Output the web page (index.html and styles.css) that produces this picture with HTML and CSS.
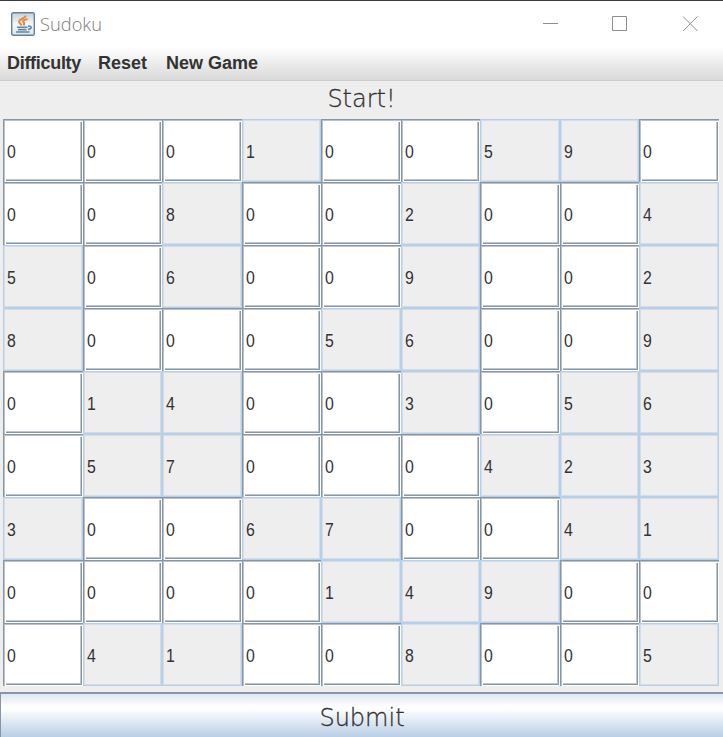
FILE: index.html
```html
<!DOCTYPE html>
<html lang="en">
<head>
<meta charset="utf-8">
<title>Sudoku</title>
<link rel="stylesheet" href="styles.css">
</head>
<body>
<div class="window">
  <header class="titlebar">
    <svg class="logo" width="24" height="24" viewBox="0 0 24 24" fill="none">
      <defs><linearGradient id="tile" x1="0" y1="0" x2="0" y2="1"><stop offset="0" stop-color="#c3d0da"/><stop offset=".5" stop-color="#f4f6f8"/><stop offset="1" stop-color="#dce4ea"/></linearGradient></defs>
      <rect x=".7" y=".7" width="22.6" height="22.6" rx="1.5" fill="url(#tile)" stroke="#66829a" stroke-width="1.4"/>
      <path d="M14.500 3.500C15 6.500 7.500 7 8 10C8.300 11.500 10.200 12 10.500 13.500M16.500 7C12 8.300 11.500 9.300 12.700 10.500C13.800 11.500 13.300 12.300 12.500 13.500" stroke="#e6893d" stroke-width="2"/>
      <path d="M6 15.200H16.500M7 17.600H15.500M5 20H18.500M17 14.200C21.500 13.600 21 16.800 17 17.500" stroke="#6488a6" stroke-width="1.6"/>
    </svg>
    <span class="title">Sudoku</span>
    <svg class="controls" width="158" height="18" viewBox="0 0 158 18" fill="none" stroke="#8e8e8e">
      <path d="M1 8.5H16M70.500 1.500H84.500V15.500H70.500ZM141 1.500L155.500 16M155.500 1.500L141 16"/>
    </svg>
  </header>
  <nav class="menubar"><span class="difficulty">Difficulty</span><span class="reset">Reset</span><span class="new">New Game</span></nav>
  <div class="status"><span>Start!</span></div>
  <main class="board">
    <div class="c"><span>0</span></div><div class="c"><span>0</span></div><div class="c"><span>0</span></div><div class="c g"><span>1</span></div><div class="c"><span>0</span></div><div class="c"><span>0</span></div><div class="c g"><span>5</span></div><div class="c g"><span>9</span></div><div class="c"><span>0</span></div>
    <div class="c"><span>0</span></div><div class="c"><span>0</span></div><div class="c g"><span>8</span></div><div class="c"><span>0</span></div><div class="c"><span>0</span></div><div class="c g"><span>2</span></div><div class="c"><span>0</span></div><div class="c"><span>0</span></div><div class="c g"><span>4</span></div>
    <div class="c g"><span>5</span></div><div class="c"><span>0</span></div><div class="c g"><span>6</span></div><div class="c"><span>0</span></div><div class="c"><span>0</span></div><div class="c g"><span>9</span></div><div class="c"><span>0</span></div><div class="c"><span>0</span></div><div class="c g"><span>2</span></div>
    <div class="c g"><span>8</span></div><div class="c"><span>0</span></div><div class="c"><span>0</span></div><div class="c"><span>0</span></div><div class="c g"><span>5</span></div><div class="c g"><span>6</span></div><div class="c"><span>0</span></div><div class="c"><span>0</span></div><div class="c g"><span>9</span></div>
    <div class="c"><span>0</span></div><div class="c g"><span>1</span></div><div class="c g"><span>4</span></div><div class="c"><span>0</span></div><div class="c"><span>0</span></div><div class="c g"><span>3</span></div><div class="c"><span>0</span></div><div class="c g"><span>5</span></div><div class="c g"><span>6</span></div>
    <div class="c"><span>0</span></div><div class="c g"><span>5</span></div><div class="c g"><span>7</span></div><div class="c"><span>0</span></div><div class="c"><span>0</span></div><div class="c"><span>0</span></div><div class="c g"><span>4</span></div><div class="c g"><span>2</span></div><div class="c g"><span>3</span></div>
    <div class="c g"><span>3</span></div><div class="c"><span>0</span></div><div class="c"><span>0</span></div><div class="c g"><span>6</span></div><div class="c g"><span>7</span></div><div class="c"><span>0</span></div><div class="c"><span>0</span></div><div class="c g"><span>4</span></div><div class="c g"><span>1</span></div>
    <div class="c"><span>0</span></div><div class="c"><span>0</span></div><div class="c"><span>0</span></div><div class="c"><span>0</span></div><div class="c g"><span>1</span></div><div class="c g"><span>4</span></div><div class="c g"><span>9</span></div><div class="c"><span>0</span></div><div class="c"><span>0</span></div>
    <div class="c"><span>0</span></div><div class="c g"><span>4</span></div><div class="c g"><span>1</span></div><div class="c"><span>0</span></div><div class="c"><span>0</span></div><div class="c g"><span>8</span></div><div class="c"><span>0</span></div><div class="c"><span>0</span></div><div class="c g"><span>5</span></div>
  </main>
  <div class="submit"><span>Submit</span></div>
</div>
</body>
</html>
```
FILE: styles.css
```css
* { box-sizing: border-box; }
body { margin: 0; overflow: hidden; }
.window {
  width: 723px;
  height: 737px;
  display: flex;
  flex-direction: column;
  background: #eeeeee;
  color: #333333;
  font-family: "Liberation Sans", sans-serif;
}
.titlebar {
  height: 47px;
  display: flex;
  align-items: center;
  padding: 0 23px 0 11px;
  background: #ffffff;
  border-top: 1px solid #3b3b3d;
}
.logo { margin-top: -1px; }
.title {
  margin-left: 5px;
  margin-top: -1px;
  font: 18.3px "Open Sans", sans-serif;
  font-weight: 300;
  color: #7c7c7c;
}
.controls { margin-left: auto; margin-top: -1px; }
.menubar {
  height: 35px;
  display: flex;
  padding: 5px 0 0 7px;
  line-height: 22px;
  font-size: 18px;
  font-weight: bold;
  background: linear-gradient(#ffffff, #dadada 32px, #dadada 33px, #cccccc 33px, #cccccc 34px, #eeeeee 34px);
}
.menubar span { white-space: nowrap; }
.difficulty { width: 91px; letter-spacing: -0.3px; }
.reset { width: 68px; }
.status {
  height: 37px;
  text-align: center;
  font: 200 24px/34px "DejaVu Sans", sans-serif;
  -webkit-text-stroke: 0.3px #333333;
}
.board {
  display: grid;
  grid-template-columns: repeat(9, 79.55px);
  grid-template-rows: repeat(9, 63.05px);
  height: 573px;
  padding-left: 3px;
}
.c {
  position: relative;
  display: flex;
  align-items: center;
  padding: 3px 0 0 3px;
  background: #ffffff;
  border: 0 solid #8796a5;
  border-width: 1px 0 0 1px;
  box-shadow: inset 1px 1px #b9c2cb;
  font-size: 18px;
}
.c span { transform: scaleX(0.88); transform-origin: left; }
.c::after {
  content: "";
  position: absolute;
  inset: 2px 1px 1px 2px;
  border: 0 solid #8796a5;
  border-width: 0 1px 1px 0;
  box-shadow: inset -1px -1px #bdc6ce;
}
.g {
  padding: 4px 0 0 3px;
  background: #eeeeee;
  border: 1px solid #b8cfe5;
  box-shadow: inset 0 0 0 1px #d0deeb;
}
.g::after { display: none; }
.submit {
  height: 45px;
  text-align: center;
  font: 200 24px/48px "DejaVu Sans", sans-serif;
  -webkit-text-stroke: 0.3px #333333;
  border-top: 2px solid #8796a5;
  border-left: 1px solid #8796a5;
  background: linear-gradient(#dde8f3, #ffffff 30%, #ffffff 34%, #b8cfe5);
}
```
